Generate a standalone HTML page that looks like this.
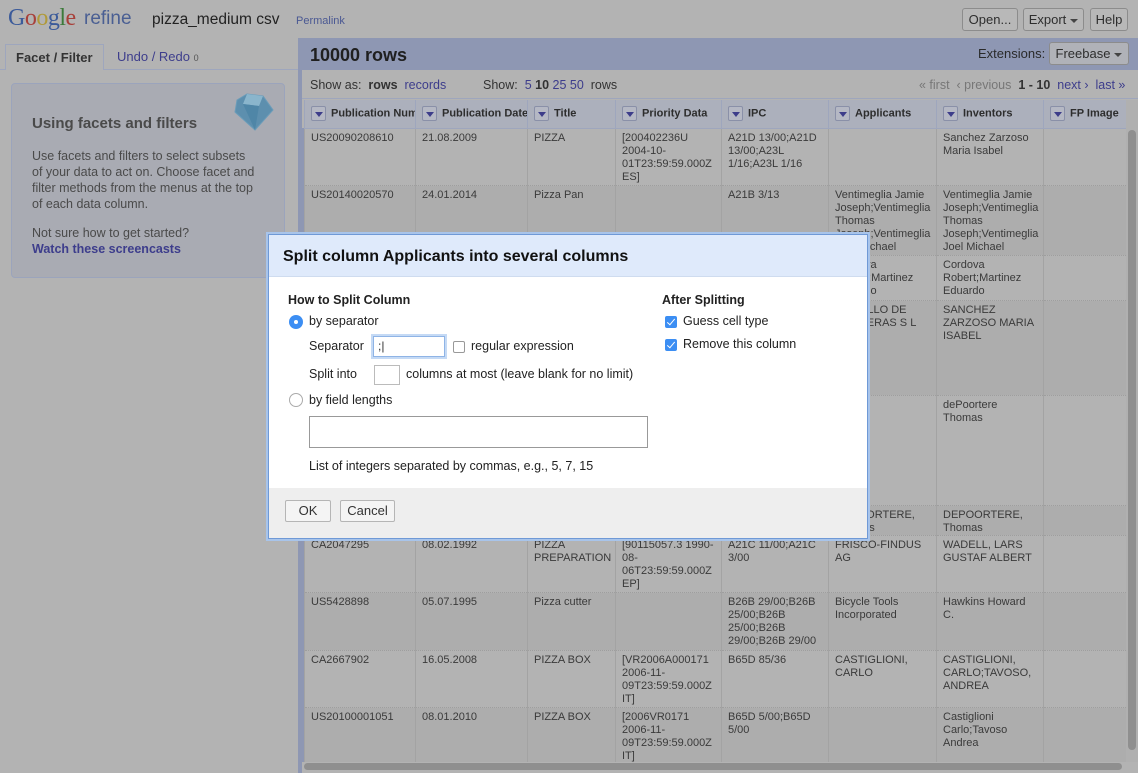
<!DOCTYPE html>
<html><head><meta charset="utf-8"><style>
*{box-sizing:border-box;margin:0;padding:0}
body{width:1138px;height:773px;overflow:hidden;background:#b3b3b3;font-family:"Liberation Sans",Arial,sans-serif;position:relative;color:#333}
.a{position:absolute}
.btn{position:absolute;height:23px;border:1px solid #8c8c8c;border-radius:3px;background:#b8b8b8;font-size:13px;color:#2e2e2e;line-height:21px;text-align:center}
.tri{display:inline-block;width:0;height:0;border-left:4px solid transparent;border-right:4px solid transparent;border-top:4px solid #444;vertical-align:middle;margin-left:4px}
table{border-collapse:collapse;table-layout:fixed;position:absolute;left:304px;top:100px;width:821px}
td{vertical-align:top;font-size:11px;line-height:13px;color:#3a3a3a;padding:3px 6px 0 6px;border-left:1px solid #a3a3a3;border-bottom:1px dotted #9e9e9e;overflow:hidden;background:#b3b3b3}
tr.e td{background:#adadad}
th{height:28px;background:#acb0bc;border-left:1px solid #9ea6bd;border-bottom:1px solid #9ea6bd;font-size:11px;font-weight:bold;color:#2d2d2d;text-align:left;padding-left:6px;white-space:nowrap;overflow:hidden}
.dd{display:inline-block;width:15px;height:15px;border:1px solid #8a90a8;background:#b5b8c4;border-radius:2px;vertical-align:middle;margin-right:5px;position:relative}
.dd:after{content:"";position:absolute;left:3px;top:5px;border-left:4px solid transparent;border-right:4px solid transparent;border-top:5px solid #3d3d8a}
.dlg{position:absolute;left:268px;top:234px;width:600px;height:305px;border:1px solid #6f99d6;background:#fff;box-shadow:0 0 0 2px #a8c4ea}
.dlg .t{height:41px;background:#dfeafb;font-size:16px;font-weight:bold;color:#111;padding:13px 0 0 14px}
.dlg .s{font-size:12.5px;color:#222}
.cb{position:absolute;width:12px;height:12px;border-radius:2px;background:#3c8ef3;}
.cb:after{content:"";position:absolute;left:4px;top:1px;width:3px;height:7px;border:solid #fff;border-width:0 1.5px 1.5px 0;transform:rotate(40deg)}
</style></head><body>
<!-- header -->
<div class="a" style="left:8px;top:5px;font-size:24px;font-family:'Liberation Serif',serif;letter-spacing:-0.5px"><span style="color:#3c5b9a">G</span><span style="color:#a8403a">o</span><span style="color:#b09a3a">o</span><span style="color:#3c5b9a">g</span><span style="color:#3c7a3a">l</span><span style="color:#a8403a">e</span></div>
<div class="a" style="left:84px;top:8px;font-size:19px;color:#4a5f93">refine</div>
<div class="a" style="left:152px;top:11px;font-size:15.5px;color:#222">pizza_medium csv</div>
<div class="a" style="left:296px;top:15px;font-size:11px;color:#4a5893">Permalink</div>
<div class="btn" style="left:962px;top:8px;width:56px">Open...</div>
<div class="btn" style="left:1023px;top:8px;width:61px">Export<span class="tri"></span></div>
<div class="btn" style="left:1090px;top:8px;width:38px">Help</div>
<!-- left panel -->
<div class="a" style="left:0;top:69px;width:298px;height:1px;background:#9ea6bd"></div>
<div class="a" style="left:5px;top:44px;width:99px;height:26px;background:#b3b3b3;border:1px solid #9ea6bd;border-bottom:none;font-size:13px;font-weight:bold;color:#333;padding:5px 0 0 10px">Facet / Filter</div>
<div class="a" style="left:117px;top:49px;font-size:13px;color:#3d3d8c">Undo / Redo <span style="font-size:9px;color:#555">0</span></div>
<div class="a" style="left:11px;top:83px;width:274px;height:195px;background:#a9abb3;border:1px solid #9ba4bc;border-radius:4px"></div>
<svg class="a" style="left:233px;top:92px" width="42" height="40" viewBox="0 0 42 40"><polygon points="4,8 14,2 30,4 40,18 22,38 2,20" fill="#5d8fae" stroke="#6a9cb9"/><polygon points="14,2 30,4 26,14 10,12" fill="#8ab5cc"/><polygon points="10,12 26,14 22,38" fill="#4f86a7"/></svg>
<div class="a" style="left:32px;top:115px;font-size:15px;font-weight:bold;color:#4a4a4a">Using facets and filters</div>
<div class="a" style="left:32px;top:148px;width:226px;font-size:12.5px;line-height:16px;color:#4a4a4a">Use facets and filters to select subsets of your data to act on. Choose facet and filter methods from the menus at the top of each data column.</div>
<div class="a" style="left:32px;top:226px;font-size:12.5px;color:#4a4a4a">Not sure how to get started?</div>
<div class="a" style="left:32px;top:242px;font-size:12.5px;font-weight:bold;color:#3d3d8c">Watch these screencasts</div>
<!-- right panel -->
<div class="a" style="left:298px;top:38px;width:840px;height:735px;background:#8e97b3"></div>
<div class="a" style="left:310px;top:45px;font-size:18px;font-weight:bold;color:#1f1f1f">10000 rows</div>
<div class="a" style="left:978px;top:46px;font-size:13px;color:#2a2a2a">Extensions:</div>
<div class="btn" style="left:1049px;top:42px;width:80px;background:#b0b2b8">Freebase<span class="tri"></span></div>
<div class="a" style="left:302px;top:70px;width:836px;height:703px;background:#b3b3b3"></div>
<div class="a" style="left:302px;top:98px;width:836px;height:1px;background:#9ea6bd"></div>
<div class="a" style="left:310px;top:78px;font-size:12.5px;color:#333">Show as: &nbsp;<b>rows</b> &nbsp;<span style="color:#3d3d8c">records</span></div>
<div class="a" style="left:483px;top:78px;font-size:12.5px;color:#333">Show: &nbsp;<span style="color:#3d3d8c">5</span> <b>10</b> <span style="color:#3d3d8c">25</span> <span style="color:#3d3d8c">50</span> &nbsp;rows</div>
<div class="a" style="left:919px;top:78px;font-size:12.5px;color:#777">« first &nbsp;‹ previous &nbsp;<b style="color:#333">1 - 10</b> &nbsp;<span style="color:#3d3d8c">next ›</span> &nbsp;<span style="color:#3d3d8c">last »</span></div>
<div class="a" style="left:300px;top:128px;width:4px;height:645px;background:#8e97b3"></div>
<table>
<colgroup><col style="width:111px"><col style="width:112px"><col style="width:88px"><col style="width:106px"><col style="width:107px"><col style="width:108px"><col style="width:107px"><col style="width:82px"></colgroup>
<tr><th><span class="dd"></span>Publication Num</th><th><span class="dd"></span>Publication Date</th><th><span class="dd"></span>Title</th><th><span class="dd"></span>Priority Data</th><th><span class="dd"></span>IPC</th><th><span class="dd"></span>Applicants</th><th><span class="dd"></span>Inventors</th><th><span class="dd"></span>FP Image</th></tr>
<tr style="height:57px"><td>US20090208610</td><td>21.08.2009</td><td>PIZZA</td><td>[200402236U 2004-10-01T23:59:59.000Z ES]</td><td>A21D 13/00;A21D 13/00;A23L 1/16;A23L 1/16</td><td></td><td>Sanchez Zarzoso Maria Isabel</td><td></td></tr>
<tr class="e" style="height:70px"><td>US20140020570</td><td>24.01.2014</td><td>Pizza Pan</td><td></td><td>A21B 3/13</td><td>Ventimeglia Jamie Joseph;Ventimeglia Thomas Joseph;Ventimeglia Joel Michael</td><td>Ventimeglia Jamie Joseph;Ventimeglia Thomas Joseph;Ventimeglia Joel Michael</td><td></td></tr>
<tr style="height:45px"><td></td><td></td><td></td><td></td><td></td><td>Cordova Robert;Martinez Eduardo</td><td>Cordova Robert;Martinez Eduardo</td><td></td></tr>
<tr class="e" style="height:95px"><td></td><td></td><td></td><td></td><td></td><td>CASTILLO DE LAS HERAS S L</td><td>SANCHEZ ZARZOSO MARIA ISABEL</td><td></td></tr>
<tr style="height:110px"><td></td><td></td><td></td><td></td><td></td><td></td><td>dePoortere Thomas</td><td></td></tr>
<tr class="e" style="height:30px"><td></td><td></td><td></td><td></td><td></td><td>DEPOORTERE, Thomas</td><td>DEPOORTERE, Thomas</td><td></td></tr>
<tr style="height:57px"><td>CA2047295</td><td>08.02.1992</td><td>PIZZA PREPARATION</td><td>[90115057.3 1990-08-06T23:59:59.000Z EP]</td><td>A21C 11/00;A21C 3/00</td><td>FRISCO-FINDUS AG</td><td>WADELL, LARS GUSTAF ALBERT</td><td></td></tr>
<tr class="e" style="height:58px"><td>US5428898</td><td>05.07.1995</td><td>Pizza cutter</td><td></td><td>B26B 29/00;B26B 25/00;B26B 25/00;B26B 29/00;B26B 29/00</td><td>Bicycle Tools Incorporated</td><td>Hawkins Howard C.</td><td></td></tr>
<tr style="height:57px"><td>CA2667902</td><td>16.05.2008</td><td>PIZZA BOX</td><td>[VR2006A000171 2006-11-09T23:59:59.000Z IT]</td><td>B65D 85/36</td><td>CASTIGLIONI, CARLO</td><td>CASTIGLIONI, CARLO;TAVOSO, ANDREA</td><td></td></tr>
<tr class="e" style="height:56px"><td>US20100001051</td><td>08.01.2010</td><td>PIZZA BOX</td><td>[2006VR0171 2006-11-09T23:59:59.000Z IT]</td><td>B65D 5/00;B65D 5/00</td><td></td><td>Castiglioni Carlo;Tavoso Andrea</td><td></td></tr>
</table>
<div class="a" style="left:302px;top:762px;width:836px;height:11px;background:#b3b3b3"></div>
<div class="a" style="left:304px;top:763px;width:818px;height:7px;border-radius:4px;background:#8f8f8f"></div>
<div class="a" style="left:1126px;top:100px;width:12px;height:662px;background:#b0b0b0"></div>
<div class="a" style="left:1128px;top:130px;width:8px;height:620px;border-radius:4px;background:#8f8f8f"></div>
<!-- dialog -->
<div class="dlg">
<div class="t">Split column Applicants into several columns</div>
<div class="a" style="left:0;top:41px;width:598px;height:1px;background:#cfdcef"></div>
<div class="a s" style="left:19px;top:58px;font-weight:bold">How to Split Column</div>
<div class="a" style="left:20px;top:80px;width:14px;height:14px;border-radius:50%;background:#3c8ef3"><div style="position:absolute;left:5px;top:5px;width:4px;height:4px;border-radius:50%;background:#fff"></div></div>
<div class="a s" style="left:40px;top:79px">by separator</div>
<div class="a s" style="left:40px;top:104px">Separator</div>
<div class="a" style="left:104px;top:101px;width:72px;height:21px;border:1px solid #8fb4e6;box-shadow:0 0 0 2px #c5daf5;font-size:12px;padding:2px 4px">;|</div>
<div class="a" style="left:184px;top:106px;width:12px;height:12px;border:1px solid #999;border-radius:2px"></div>
<div class="a s" style="left:202px;top:104px">regular expression</div>
<div class="a s" style="left:40px;top:132px">Split into</div>
<div class="a" style="left:105px;top:130px;width:26px;height:20px;border:1px solid #bbb"></div>
<div class="a s" style="left:137px;top:132px">columns at most (leave blank for no limit)</div>
<div class="a" style="left:20px;top:158px;width:14px;height:14px;border-radius:50%;border:1px solid #aaa"></div>
<div class="a s" style="left:40px;top:158px">by field lengths</div>
<div class="a" style="left:40px;top:181px;width:339px;height:32px;border:1px solid #999"></div>
<div class="a s" style="left:40px;top:224px">List of integers separated by commas, e.g., 5, 7, 15</div>
<div class="a s" style="left:393px;top:58px;font-weight:bold">After Splitting</div>
<div class="cb" style="left:396px;top:81px"></div>
<div class="a s" style="left:414px;top:79px">Guess cell type</div>
<div class="cb" style="left:396px;top:104px"></div>
<div class="a s" style="left:414px;top:102px">Remove this column</div>
<div class="a" style="left:0;top:253px;width:598px;height:50px;background:#eeeeee"></div>
<div class="a" style="left:16px;top:265px;width:46px;height:22px;border:1px solid #b5b5b5;border-radius:2px;background:#f4f4f4;font-size:13px;text-align:center;line-height:20px">OK</div>
<div class="a" style="left:71px;top:265px;width:55px;height:22px;border:1px solid #b5b5b5;border-radius:2px;background:#f4f4f4;font-size:13px;text-align:center;line-height:20px">Cancel</div>
</div>
</body></html>
